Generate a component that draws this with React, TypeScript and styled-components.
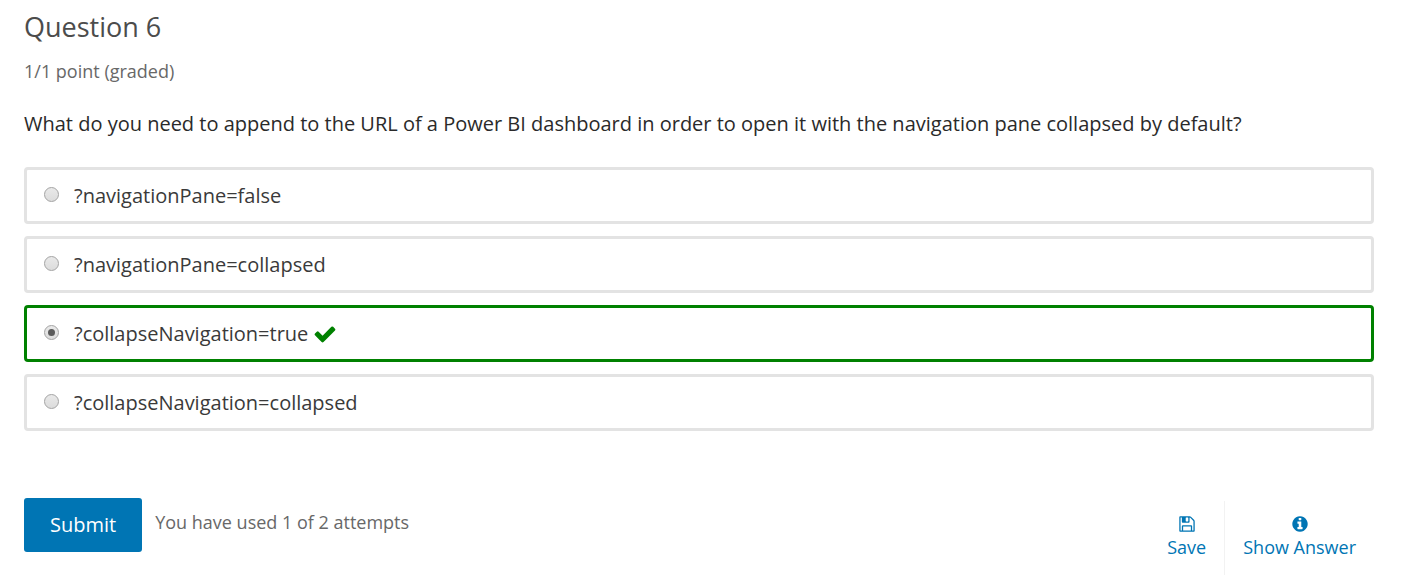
import React, { useState } from "react";
import styled, { createGlobalStyle } from "styled-components";

const GlobalStyle = createGlobalStyle`
  *, *::before, *::after { box-sizing: border-box; }
  body {
    margin: 0;
    background: #fff;
    color: #3a3a3a;
    font-family: "Open Sans", "Noto Sans", sans-serif;
    font-size: 20px;
    line-height: 28px;
  }
`;

const Problem = styled.main`
  padding: 7px 28px 0 24px;
`;

const Title = styled.h1`
  margin: 0;
  font-size: 27px;
  font-weight: 400;
  line-height: 40px;
  color: #4c4c4c;
`;

const Progress = styled.p`
  margin: 12px 0 0;
  font-size: 18px;
  line-height: 24px;
  color: #686868;
`;

const Choices = styled.fieldset`
  display: flex;
  flex-direction: column;
  gap: 12px;
  min-width: 0;
  margin: 27px 0 0;
  padding: 0;
  border: 0;
`;

const Prompt = styled.legend`
  padding: 0;
  margin-bottom: 29px;
  color: #2a2a2a;
`;

const Choice = styled.label<{ $correct: boolean }>`
  display: flex;
  align-items: center;
  height: 57px;
  padding: 0 17px;
  border: 3px solid ${(p) => (p.$correct ? "#008100" : "#e3e3e3")};
  border-radius: 4px;
  cursor: pointer;
`;

const Radio = styled.input`
  appearance: none;
  display: grid;
  place-items: center;
  width: 15px;
  height: 15px;
  margin: 0 15px 3px 0;
  border: 1px solid #a3a3a3;
  border-radius: 50%;
  background: linear-gradient(#e9e9e9, #dcdcdc);

  &:checked::before {
    content: "";
    width: 7px;
    height: 7px;
    border-radius: 50%;
    background: #5a5a5a;
  }
`;

const Icon = styled.svg<{ $size: number }>`
  display: block;
  flex: none;
  width: ${(p) => p.$size}px;
  height: ${(p) => p.$size}px;
  fill: currentColor;
`;

const Correct = styled.span`
  margin-left: 5px;
  color: #008100;
`;

const Actions = styled.footer`
  display: flex;
  align-items: flex-start;
  margin-top: 67px;
`;

const Submit = styled.button`
  height: 54px;
  padding: 0 26px;
  border: 0;
  border-radius: 3px;
  background: #0075b4;
  color: #fff;
  font: inherit;
  cursor: pointer;
`;

const Attempts = styled.p`
  margin: 12px 0 0 13px;
  font-size: 18px;
  line-height: 24px;
  color: #686868;
`;

const Tools = styled.div`
  display: flex;
  margin: 3px 0 0 auto;
`;

const Tool = styled.button`
  display: flex;
  flex-direction: column;
  align-items: center;
  gap: 2px;
  height: 74px;
  padding: 14px 18px 0;
  border: 0;
  background: none;
  color: #0075b4;
  font: inherit;
  font-size: 18px;
  line-height: 24px;
  cursor: pointer;

  & + & {
    border-left: 1px solid #f2f2f2;
  }
`;

const CHECK =
  "M1671 566q0 40-28 68l-724 724-136 136q-28 28-68 28t-68-28l-136-136-362-362q-28-28-28-68t28-68l136-136q28-28 68-28t68 28l294 295 656-657q28-28 68-28t68 28l136 136q28 28 28 68z";
const FLOPPY =
  "M512 1536h768v-384h-768v384zm896 0h128v-896q0-14-10-38.5t-20-34.5l-281-281q-10-10-34-20t-39-10v416q0 40-28 68t-68 28h-576q-40 0-68-28t-28-68v-416h-128v1280h128v-416q0-40 28-68t68-28h832q40 0 68 28t28 68v416zm-384-928v-320q0-13-9.5-22.5t-22.5-9.5h-192q-13 0-22.5 9.5t-9.5 22.5v320q0 13 9.5 22.5t22.5 9.5h192q13 0 22.5-9.5t9.5-22.5zm640 32v928q0 40-28 68t-68 28h-1344q-40 0-68-28t-28-68v-1344q0-40 28-68t68-28h928q40 0 88 20t76 48l280 280q28 28 48 76t20 88z";
const INFO =
  "M1152 1376v-160q0-14-9-23t-23-9h-96v-512q0-14-9-23t-23-9h-320q-14 0-23 9t-9 23v160q0 14 9 23t23 9h96v320h-96q-14 0-23 9t-9 23v160q0 14 9 23t23 9h448q14 0 23-9t9-23zm-128-896v-160q0-14-9-23t-23-9h-192q-14 0-23 9t-9 23v160q0 14 9 23t23 9h192q14 0 23-9t9-23zm640 416q0 209-103 385.5t-279.5 279.5-385.5 103-385.5-103-279.5-279.5-103-385.5 103-385.5 279.5-279.5 385.5-103 385.5 103 279.5 279.5 103 385.5z";

function Glyph({ path, size }: { path: string; size: number }) {
  return (
    <Icon $size={size} viewBox="0 0 1792 1792" aria-hidden="true">
      <path d={path} />
    </Icon>
  );
}

const ANSWER = "?collapseNavigation=true";
const OPTIONS = [
  "?navigationPane=false",
  "?navigationPane=collapsed",
  ANSWER,
  "?collapseNavigation=collapsed",
];

export default function App() {
  const [selected, setSelected] = useState(ANSWER);

  return (
    <>
      <GlobalStyle />
      <Problem>
        <Title>Question 6</Title>
        <Progress>1/1 point (graded)</Progress>
        <Choices>
          <Prompt>
            What do you need to append to the URL of a Power BI dashboard in
            order to open it with the navigation pane collapsed by default?
          </Prompt>
          {OPTIONS.map((option) => {
            const correct = option === selected && option === ANSWER;
            return (
              <Choice key={option} $correct={correct}>
                <Radio
                  type="radio"
                  name="choice"
                  value={option}
                  checked={option === selected}
                  onChange={() => setSelected(option)}
                />
                {option}
                {correct && (
                  <Correct>
                    <Glyph path={CHECK} size={24} />
                  </Correct>
                )}
              </Choice>
            );
          })}
        </Choices>
        <Actions>
          <Submit type="button">Submit</Submit>
          <Attempts>You have used 1 of 2 attempts</Attempts>
          <Tools>
            <Tool type="button">
              <Glyph path={FLOPPY} size={18} />
              Save
            </Tool>
            <Tool type="button">
              <Glyph path={INFO} size={18} />
              Show Answer
            </Tool>
          </Tools>
        </Actions>
      </Problem>
    </>
  );
}
